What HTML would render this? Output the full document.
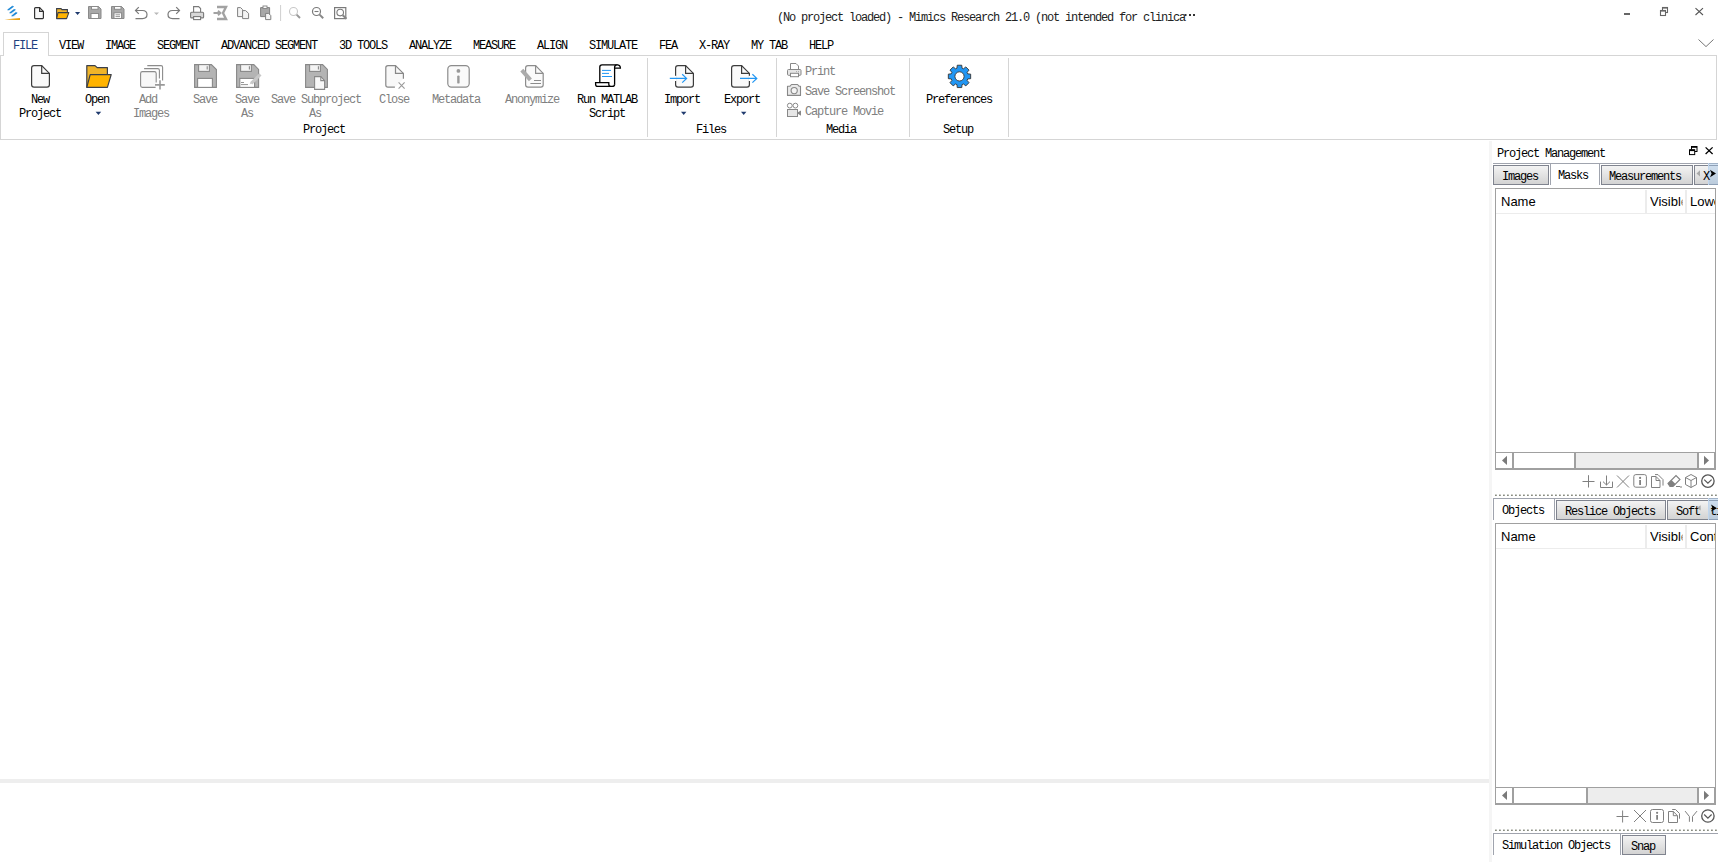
<!DOCTYPE html>
<html><head><meta charset="utf-8">
<style>
*{margin:0;padding:0;box-sizing:border-box}
html,body{width:1718px;height:862px;overflow:hidden;background:#fff;position:relative}
body{font-family:"Liberation Mono",monospace;font-size:12px;color:#000}
.a{position:absolute}
.t{position:absolute;margin:2px 0 0 -1px;white-space:pre;font-family:"Liberation Mono",monospace;font-size:12px;letter-spacing:-1.2px;line-height:14px}
.g{color:#808080}
.sans{font-family:"Liberation Sans",sans-serif;letter-spacing:0;font-size:13px}
svg{position:absolute;overflow:visible}
.tab{border:1px solid #80848f;background:linear-gradient(#f3f3f3,#d3d3d3)}
</style></head><body>

<!-- Title bar -->
<div class="t" style="left:778px;top:9px;color:#222">(No project loaded) - Mimics Research 21.0 (not intended for clinica</div>

<!-- Tabs -->
<div class="a" style="left:3px;top:32px;width:46px;height:24px;border:1px solid #d5d5d5;border-bottom:none;background:#fff;z-index:2"></div>
<div class="t" style="left:14px;top:37px;color:#1f3f7f;z-index:3">FILE</div>
<div class="t" style="left:60px;top:37px">VIEW</div>
<div class="t" style="left:106px;top:37px">IMAGE</div>
<div class="t" style="left:158px;top:37px">SEGMENT</div>
<div class="t" style="left:222px;top:37px">ADVANCED SEGMENT</div>
<div class="t" style="left:340px;top:37px">3D TOOLS</div>
<div class="t" style="left:410px;top:37px">ANALYZE</div>
<div class="t" style="left:474px;top:37px">MEASURE</div>
<div class="t" style="left:538px;top:37px">ALIGN</div>
<div class="t" style="left:590px;top:37px">SIMULATE</div>
<div class="t" style="left:660px;top:37px">FEA</div>
<div class="t" style="left:700px;top:37px">X-RAY</div>
<div class="t" style="left:752px;top:37px">MY TAB</div>
<div class="t" style="left:810px;top:37px">HELP</div>

<!-- Ribbon -->
<div class="a" style="left:0;top:55px;width:1717px;height:85px;border:1px solid #d5d5d5;z-index:1"></div>
<div class="a" style="left:4px;top:55px;width:44px;height:1px;background:#fff;z-index:2"></div>
<!-- group separators -->
<div class="a" style="left:647px;top:58px;width:1px;height:79px;background:#d5d5d5"></div>
<div class="a" style="left:776px;top:58px;width:1px;height:79px;background:#d5d5d5"></div>
<div class="a" style="left:909px;top:58px;width:1px;height:79px;background:#d5d5d5"></div>
<div class="a" style="left:1008px;top:58px;width:1px;height:79px;background:#d5d5d5"></div>

<!-- ribbon labels -->
<div class="t" style="left:32px;top:91px">New</div>
<div class="t" style="left:20px;top:105px">Project</div>
<div class="t" style="left:86px;top:91px">Open</div>
<div class="t g" style="left:140px;top:91px">Add</div>
<div class="t g" style="left:134px;top:105px">Images</div>
<div class="t g" style="left:194px;top:91px">Save</div>
<div class="t g" style="left:236px;top:91px">Save</div>
<div class="t g" style="left:242px;top:105px">As</div>
<div class="t g" style="left:272px;top:91px">Save Subproject</div>
<div class="t g" style="left:310px;top:105px">As</div>
<div class="t" style="left:304px;top:121px">Project</div>
<div class="t g" style="left:380px;top:91px">Close</div>
<div class="t g" style="left:433px;top:91px">Metadata</div>
<div class="t g" style="left:506px;top:91px">Anonymize</div>
<div class="t" style="left:578px;top:91px">Run MATLAB</div>
<div class="t" style="left:590px;top:105px">Script</div>
<div class="t" style="left:665px;top:91px">Import</div>
<div class="t" style="left:725px;top:91px">Export</div>
<div class="t" style="left:697px;top:121px">Files</div>
<div class="t g" style="left:806px;top:63px">Print</div>
<div class="t g" style="left:806px;top:83px">Save Screenshot</div>
<div class="t g" style="left:806px;top:103px">Capture Movie</div>
<div class="t" style="left:827px;top:121px">Media</div>
<div class="t" style="left:927px;top:91px">Preferences</div>
<div class="t" style="left:944px;top:121px">Setup</div>

<!-- main area separator -->
<div class="a" style="left:0;top:779px;width:1489px;height:4px;background:#eeeeee"></div>
<!-- panel left column -->
<div class="a" style="left:1489px;top:141px;width:3px;height:721px;background:#f5f5f5"></div>

<!-- Right panel -->
<div class="t" style="left:1498px;top:145px">Project Management</div>


<!-- ===== RIGHT PANEL ===== -->
<div class="a" style="left:1493px;top:163px;width:225px;height:1px;background:#a0a4ae"></div>
<div class="a tab" style="left:1493px;top:165px;width:56px;height:20px"></div>
<div class="a" style="left:1550px;top:163px;width:50px;height:22px;background:#fff;border:1px solid #a0a4ae;border-bottom:none"></div>
<div class="a tab" style="left:1601px;top:165px;width:92px;height:20px"></div>
<div class="a tab" style="left:1694px;top:165px;width:30px;height:20px"></div>
<div class="a" style="left:1708px;top:163px;width:10px;height:22px;background:rgba(160,195,230,0.45);border-left:1px solid #c0d6ee"></div>
<div class="t" style="left:1503px;top:168px">Images</div>
<div class="t" style="left:1559px;top:167px">Masks</div>
<div class="t" style="left:1610px;top:168px">Measurements</div>
<div class="t" style="left:1704px;top:168px">X</div>

<div class="a" style="left:1495px;top:188px;width:221px;height:282px;border:1px solid #a0a0a0;border-bottom:2px solid #a0a0a0;background:#fff"></div>
<div class="a" style="left:1496px;top:213px;width:219px;height:1px;background:#ececec"></div>
<div class="a" style="left:1645px;top:190px;width:2px;height:23px;background:#ececec"></div>
<div class="a" style="left:1685px;top:190px;width:2px;height:23px;background:#ececec"></div>
<div class="t sans" style="left:1501px;top:195px;margin:0">Name</div>
<div class="t sans" style="left:1650px;top:195px;margin:0;width:33px;overflow:hidden">Visible</div>
<div class="t sans" style="left:1690px;top:195px;margin:0;width:25px;overflow:hidden">Lower</div>
<!-- scrollbar 1 -->
<div class="a" style="left:1714px;top:452px;width:2px;height:18px;background:#a0a0a0"></div>
<div class="a" style="left:1496px;top:452px;width:219px;height:1px;background:#a0a0a0"></div>
<div class="a" style="left:1512px;top:453px;width:2px;height:15px;background:#a0a0a0"></div>
<div class="a" style="left:1574px;top:453px;width:2px;height:15px;background:#a0a0a0"></div>
<div class="a" style="left:1576px;top:453px;width:121px;height:15px;background:#ededed"></div>
<div class="a" style="left:1697px;top:453px;width:2px;height:15px;background:#a0a0a0"></div>

<div class="a" style="left:1493px;top:498px;width:225px;height:1px;background:#a0a4ae"></div>
<div class="a" style="left:1493px;top:498px;width:62px;height:22px;background:#fff;border:1px solid #a0a4ae;border-bottom:none"></div>
<div class="a tab" style="left:1556px;top:500px;width:110px;height:20px"></div>
<div class="a tab" style="left:1667px;top:500px;width:60px;height:20px"></div>
<div class="a" style="left:1708px;top:498px;width:10px;height:22px;background:rgba(160,195,230,0.45);border-left:1px solid #c0d6ee"></div>
<div class="t" style="left:1503px;top:502px">Objects</div>
<div class="t" style="left:1566px;top:503px">Reslice Objects</div>
<div class="t" style="left:1677px;top:503px">Soft</div>
<div class="t" style="left:1711px;top:503px">ti</div>

<div class="a" style="left:1495px;top:523px;width:221px;height:282px;border:1px solid #a0a0a0;border-bottom:2px solid #a0a0a0;background:#fff"></div>
<div class="a" style="left:1496px;top:548px;width:219px;height:1px;background:#ececec"></div>
<div class="a" style="left:1645px;top:525px;width:2px;height:23px;background:#ececec"></div>
<div class="a" style="left:1685px;top:525px;width:2px;height:23px;background:#ececec"></div>
<div class="t sans" style="left:1501px;top:530px;margin:0">Name</div>
<div class="t sans" style="left:1650px;top:530px;margin:0;width:33px;overflow:hidden">Visible</div>
<div class="t sans" style="left:1690px;top:530px;margin:0;width:25px;overflow:hidden">Contour</div>
<!-- scrollbar 2 -->
<div class="a" style="left:1714px;top:787px;width:2px;height:18px;background:#a0a0a0"></div>
<div class="a" style="left:1496px;top:787px;width:219px;height:1px;background:#a0a0a0"></div>
<div class="a" style="left:1512px;top:788px;width:2px;height:15px;background:#a0a0a0"></div>
<div class="a" style="left:1586px;top:788px;width:2px;height:15px;background:#a0a0a0"></div>
<div class="a" style="left:1588px;top:788px;width:109px;height:15px;background:#ededed"></div>
<div class="a" style="left:1697px;top:788px;width:2px;height:15px;background:#a0a0a0"></div>

<div class="a" style="left:1493px;top:833px;width:225px;height:1px;background:#a0a4ae"></div>
<div class="a" style="left:1493px;top:833px;width:128px;height:22px;background:#fff;border:1px solid #a0a4ae;border-bottom:none"></div>
<div class="a tab" style="left:1622px;top:835px;width:44px;height:20px"></div>
<div class="t" style="left:1503px;top:837px">Simulation Objects</div>
<div class="t" style="left:1632px;top:838px">Snap</div>

<div class="a" style="left:1680px;top:192px;width:5px;height:18px;background:linear-gradient(90deg,rgba(255,255,255,0),#fff 80%)"></div>
<div class="a" style="left:1680px;top:527px;width:5px;height:18px;background:linear-gradient(90deg,rgba(255,255,255,0),#fff 80%)"></div>

<svg width="1718" height="862" style="left:0;top:0;z-index:5" viewBox="0 0 1718 862">
<!-- ===== QAT ===== -->
<g id="logo">
 <path d="M12,9 L17,12 L15,17 L10,14Z" fill="#eeeeee" opacity="0.6"/>
 <path d="M7.6,9.8 L9,10 L13.6,6.6 L12.2,6.2Z M9.6,12.8 L11,13 L15.4,9.8 L14,9.4Z M11.6,15.9 L13,16.1 L17.2,12.9 L15.8,12.5Z" fill="#0b7fd4" stroke="#0b7fd4" stroke-width="0.6" stroke-linejoin="round"/>
 <path d="M4.5,19.6 Q12,18.6 20,18 L20,20 Q12,20.2 4.5,19.6Z" fill="#eaa010"/>
</g>
<path d="M34.6,8.6 Q34.6,7.6 35.6,7.6 L39.6,7.6 L43.4,11.4 L43.4,17.8 Q43.4,18.6 42.6,18.6 L35.4,18.6 Q34.6,18.6 34.6,17.8Z" fill="#f8f8f8" stroke="#333" stroke-width="1.2"/>
<path d="M39.6,7.6 V11.4 H43.4" fill="none" stroke="#333" stroke-width="1.2"/>
<!-- folder -->
<path d="M56.6,18.6 V8.6 H61 L62,9.6 H67.4 V12.6" fill="#f0b429" stroke="#3a3f4a" stroke-width="1.1"/>
<path d="M58,12.6 H68.8 L66.6,18.6 H56.6Z" fill="#ffb300" stroke="#3a3f4a" stroke-width="1.1" stroke-linejoin="round"/>
<path d="M75,12 H80.2 L77.6,15Z" fill="#1f3a6e"/>
<!-- save -->
<path d="M88.5,6.5 H98.5 L101,9 V18.5 H88.5Z" fill="#a8a8a8" stroke="#8a8a8a" stroke-width="1"/>
<rect x="91.5" y="6.5" width="6.5" height="2.8" fill="#fff" stroke="#8a8a8a" stroke-width="1"/>
<rect x="91" y="13.5" width="7.6" height="5" fill="#fff" stroke="#8a8a8a" stroke-width="1"/>
<!-- save all -->
<path d="M111.5,6.5 H121.5 L124,9 V18.5 H111.5Z" fill="#a8a8a8" stroke="#8a8a8a" stroke-width="1"/>
<rect x="114.5" y="6.5" width="6.5" height="2.8" fill="#fff" stroke="#8a8a8a" stroke-width="1"/>
<rect x="114" y="12.8" width="7.6" height="5.7" fill="#fff" stroke="#8a8a8a" stroke-width="1"/>
<path d="M115.5,14.8 H120 M115.5,16.6 H120" stroke="#8a8a8a" stroke-width="0.9"/>
<!-- undo -->
<path d="M135.5,10.5 H142.5 Q147,10.5 147,14.6 Q147,18.6 142.5,18.6 H135.5" fill="none" stroke="#7a7a7a" stroke-width="1.2"/>
<path d="M138.8,7.2 L135.5,10.5 L138.8,13.8" fill="none" stroke="#7a7a7a" stroke-width="1.2"/>
<path d="M154,12.5 H159 L156.5,15Z" fill="#b8b8b8"/>
<!-- redo -->
<path d="M179.5,10.5 H172.5 Q168,10.5 168,14.6 Q168,18.6 172.5,18.6 H179.5" fill="none" stroke="#7a7a7a" stroke-width="1.2"/>
<path d="M176.2,7.2 L179.5,10.5 L176.2,13.8" fill="none" stroke="#7a7a7a" stroke-width="1.2"/>
<!-- print -->
<path d="M193.6,12.3 V6.6 H198.6 L200.6,8.6 V12.3" fill="#fff" stroke="#7a7a7a" stroke-width="1.1"/>
<rect x="190.6" y="12.3" width="13" height="5.6" rx="1" fill="#d8d8d8" stroke="#7a7a7a" stroke-width="1.1"/>
<rect x="193.6" y="16.6" width="7" height="3" fill="#fff" stroke="#7a7a7a" stroke-width="1.1"/>
<!-- exit (blurred) -->
<defs><filter id="bl" x="-20%" y="-20%" width="140%" height="140%"><feGaussianBlur stdDeviation="0.5"/></filter></defs><g opacity="0.6" filter="url(#bl)"><path d="M217,7 H226 L223,13 L226,19 H217" fill="none" stroke="#666" stroke-width="2.4"/><path d="M213.5,13 H220 M218,10.8 L220.5,13 L218,15.2" stroke="#666" stroke-width="1.8" fill="none"/></g>
<!-- copy -->
<path d="M237.6,7.6 H240.6 L242.6,9.6 V16.6 H237.6Z" fill="#f4f4f4" stroke="#808080" stroke-width="1"/>
<path d="M242.6,10.6 H245.6 L248.6,13.4 V18.6 H242.6Z" fill="#f4f4f4" stroke="#808080" stroke-width="1"/>
<!-- paste -->
<path d="M260.6,7.6 H269.6 V16.6 H260.6Z" fill="#a8a8a8" stroke="#808080" stroke-width="1"/>
<rect x="263" y="6" width="4" height="2.4" fill="#fff" stroke="#808080" stroke-width="0.9"/>
<path d="M265.6,13.4 H268.6 L270.8,15.6 V19.6 H265.6Z" fill="#f4f4f4" stroke="#808080" stroke-width="1"/>
<path d="M280.6,5 V21" stroke="#cfcfcf" stroke-width="1"/>
<!-- zoom -->
<circle cx="293.5" cy="11.5" r="4" fill="#fff" stroke="#c8c8c8" stroke-width="1.1"/>
<path d="M296.6,14.6 L300,18" stroke="#999" stroke-width="2"/>
<circle cx="316.5" cy="11.5" r="4" fill="#fff" stroke="#7a7a7a" stroke-width="1.2"/>
<path d="M314.5,11.5 H318.5" stroke="#7a7a7a" stroke-width="1.1"/>
<path d="M319.6,14.6 L323.2,18.2" stroke="#888" stroke-width="2"/>
<rect x="334.6" y="7.6" width="11.2" height="11" fill="none" stroke="#7a7a7a" stroke-width="1.2"/>
<circle cx="340.2" cy="12.6" r="3.3" fill="#fff" stroke="#7a7a7a" stroke-width="1.1"/>
<path d="M342.8,15.2 L346.4,18.8" stroke="#888" stroke-width="2"/>
<!-- window controls -->
<rect x="1184.5" y="14" width="2" height="2" fill="#333"/><rect x="1189" y="14" width="2" height="2" fill="#333"/><rect x="1193" y="14" width="2" height="2" fill="#333"/>
<rect x="1624" y="13" width="6" height="2" fill="#666"/>
<rect x="1662.5" y="7.5" width="5" height="5" fill="none" stroke="#666" stroke-width="1.1"/>
<path d="M1662,7.8 H1668" stroke="#666" stroke-width="1.6"/>
<rect x="1660.5" y="10.5" width="5" height="5" fill="#fff" stroke="#666" stroke-width="1.1"/>
<path d="M1660,10.8 H1666" stroke="#666" stroke-width="1.6"/>
<path d="M1695.5,8.2 L1703,15 M1703,8.2 L1695.5,15" stroke="#555" stroke-width="1.1"/>
<path d="M1698.5,39.5 L1706,46.6 L1713.5,39.5" fill="none" stroke="#777" stroke-width="1"/>

<!-- ===== RIBBON ===== -->
<!-- New project -->
<path d="M31.6,68 Q31.6,65.6 34,65.6 H41.7 L49.4,73.4 V84.8 Q49.4,87.2 47,87.2 H34 Q31.6,87.2 31.6,84.8Z" fill="#fafafa" stroke="#3c3c3c" stroke-width="1.2"/>
<path d="M41.7,65.6 V73.4 H49.4" fill="none" stroke="#3c3c3c" stroke-width="1.2"/>
<!-- Open -->
<path d="M86.8,87.4 V65.6 H95 L97.2,67.6 H107.4 V74.6" fill="#f0b429" stroke="#3a3f4a" stroke-width="1.2" stroke-linejoin="round"/>
<path d="M90.2,74.6 H111.2 L107.4,87.4 H86.8Z" fill="#ffb300" stroke="#3a3f4a" stroke-width="1.2" stroke-linejoin="round"/>
<path d="M95.6,111.8 H101.2 L98.4,115Z" fill="#1f3a6e"/>
<!-- Add images -->
<path d="M147.3,65.6 H161 Q162.6,65.6 162.6,67.2 V80.6" fill="none" stroke="#8c8c8c" stroke-width="1.1"/>
<path d="M144.1,68.6 H157.8 Q159.4,68.6 159.4,70.2 V78.4" fill="none" stroke="#8c8c8c" stroke-width="1.1"/>
<path d="M155.6,87.4 H142.4 Q140.6,87.4 140.6,85.6 V73.4 Q140.6,71.6 142.4,71.6 H154.4 Q156.2,71.6 156.2,73.4 V82.4" fill="#f8f8f8" stroke="#8c8c8c" stroke-width="1.1"/>
<path d="M155,84.9 H164.8 M160,80.2 V89.6" stroke="#999" stroke-width="1.6"/>
<!-- Save -->
<path d="M194.6,64.6 H211.4 L216.4,69.6 V87.4 H194.6Z" fill="#b4b4b4" stroke="#888" stroke-width="1.1"/>
<rect x="198.6" y="64.6" width="10.8" height="6.8" fill="#f4f4f4" stroke="#888" stroke-width="1.1"/>
<path d="M207.2,66.2 V69.4" stroke="#888" stroke-width="1.1"/>
<rect x="197.6" y="78.4" width="14.8" height="9" fill="#fff" stroke="#888" stroke-width="1.1"/>
<!-- Save As -->
<path d="M236.6,64.6 H253.8 L258.6,69.4 V87.4 H236.6Z" fill="#b4b4b4" stroke="#888" stroke-width="1.1"/>
<rect x="240.6" y="64.6" width="10.8" height="6.8" fill="#f4f4f4" stroke="#888" stroke-width="1.1"/>
<path d="M249.4,66.2 V69.4" stroke="#888" stroke-width="1.1"/>
<rect x="239.8" y="78.4" width="14.8" height="9" fill="#fff" stroke="#888" stroke-width="1.1"/>
<path d="M241,82.5 H244 M241,84.6 H248" stroke="#888" stroke-width="0.9"/>
<path d="M251.2,83.4 L260.4,74.4" stroke="#c8c8c8" stroke-width="3.2"/><path d="M249.4,84.6 L251.6,81.2 L253.2,82.8Z" fill="#c8c8c8"/>
<!-- Subproject -->
<path d="M305.6,64.6 H322.6 L327.4,69.4 V87.4 H305.6Z" fill="#b4b4b4" stroke="#888" stroke-width="1.1"/>
<rect x="309.6" y="64.6" width="10.8" height="6.8" fill="#f4f4f4" stroke="#888" stroke-width="1.1"/>
<path d="M318.4,66.2 V69.4" stroke="#888" stroke-width="1.1"/>
<path d="M314.6,76.6 H320.8 L324.6,80.6 V89.4 H314.6Z" fill="#f8f8f8" stroke="#888" stroke-width="1.1"/>
<path d="M320.8,76.6 V80.6 H324.6" fill="none" stroke="#888" stroke-width="1.1"/>
<!-- Close -->
<path d="M394.9,87.2 H388 Q385.8,87.2 385.8,85 V67.8 Q385.8,65.6 388,65.6 H395.5 L403.4,73.4 V78.8" fill="#f8f8f8" stroke="#888" stroke-width="1.2"/>
<path d="M395.5,65.6 V73.4 H403.4" fill="none" stroke="#888" stroke-width="1.2"/>
<path d="M398.6,82.4 L404.6,88.6 M404.6,82.4 L398.6,88.6" stroke="#999" stroke-width="1.1"/>
<!-- Metadata -->
<rect x="447.8" y="65.6" width="21.4" height="21.6" rx="3.6" fill="#fafafa" stroke="#8c8c8c" stroke-width="1.2"/>
<circle cx="458.4" cy="70.9" r="1.9" fill="#999"/>
<path d="M458.4,76.6 V82.4" stroke="#999" stroke-width="2.4" stroke-linecap="round"/>
<!-- Anonymize -->
<path d="M528,65.6 H535.6 L543.2,73.4 V84.8 Q543.2,87.2 540.8,87.2 H528 Q525.6,87.2 525.6,84.8 V68 Q525.6,65.6 528,65.6Z" fill="#fafafa" stroke="#8c8c8c" stroke-width="1.2"/>
<path d="M535.6,65.6 V73.4 H543.2" fill="none" stroke="#8c8c8c" stroke-width="1.2"/>
<path d="M534,80.5 H541 M530.4,83.5 H541" stroke="#8c8c8c" stroke-width="1"/>
<path d="M521.8,70.2 L530.4,79.8" stroke="#ababab" stroke-width="4"/>
<!-- MATLAB -->
<path d="M599.8,82.6 V67 Q599.8,64.8 602,64.8 H617.6" fill="none" stroke="#000" stroke-width="1.3"/>
<path d="M614.6,84.4 V67.2 Q614.6,64.8 617.2,64.8 Q620.4,64.8 620.4,68.2 H614.6" fill="#fff" stroke="#000" stroke-width="1.3"/>
<path d="M614.6,84.2 Q614.6,86.4 612,86.4 H597.8 Q595.6,86.4 595.6,84.2 V82.6 H608.8 V84.2 Q608.8,86.4 611.2,86.4" fill="#fff" stroke="#000" stroke-width="1.3"/>
<path d="M602,70.4 H611 M602,73.4 H609 M602,76.5 H612" stroke="#2196f3" stroke-width="1"/>
<!-- Import -->
<path d="M678,65.6 H685.6 L693.4,73.4 V84.8 Q693.4,87.2 691,87.2 H678 Q675.6,87.2 675.6,84.8 V68 Q675.6,65.6 678,65.6Z" fill="#fafafa" stroke="#3c3c3c" stroke-width="1.2"/>
<path d="M685.6,65.6 V73.4 H693.4" fill="none" stroke="#3c3c3c" stroke-width="1.2"/>
<path d="M675.6,75.8 V81" stroke="#fff" stroke-width="2"/>
<path d="M669.8,78.4 H686.6 M682.2,74.2 L686.6,78.4 L682.2,82.6" fill="none" stroke="#2196f3" stroke-width="1.2"/>
<path d="M681,111.8 H686.4 L683.7,115Z" fill="#1f3a6e"/>
<!-- Export -->
<path d="M734,65.6 H741.6 L749.4,73.4 V84.8 Q749.4,87.2 747,87.2 H734 Q731.6,87.2 731.6,84.8 V68 Q731.6,65.6 734,65.6Z" fill="#fafafa" stroke="#3c3c3c" stroke-width="1.2"/>
<path d="M741.6,65.6 V73.4 H749.4" fill="none" stroke="#3c3c3c" stroke-width="1.2"/>
<path d="M749.4,75.8 V81" stroke="#fff" stroke-width="2"/>
<path d="M740,78.4 H756.8 M752.4,74.2 L756.8,78.4 L752.4,82.6" fill="none" stroke="#2196f3" stroke-width="1.2"/>
<path d="M741,111.8 H746.4 L743.7,115Z" fill="#1f3a6e"/>
<!-- Print small -->
<path d="M790.5,69.5 V63.5 H796 L798.5,66 V69.5" fill="#fff" stroke="#888" stroke-width="1"/>
<rect x="787.5" y="69.5" width="13.5" height="5.8" rx="1" fill="#e6e6e6" stroke="#888" stroke-width="1"/>
<rect x="790.5" y="73.3" width="8" height="3.4" fill="#fff" stroke="#888" stroke-width="1"/>
<path d="M796.2,71.6 H796.9 M798.3,71.6 H799" stroke="#888" stroke-width="0.9"/>
<!-- camera -->
<path d="M787.5,86.2 H790 L791.5,84.5 H797.5 L799,86.2 H800.5 V95.4 H787.5Z" fill="#eaeaea" stroke="#888" stroke-width="1.1" stroke-linejoin="round"/>
<circle cx="794.2" cy="90.6" r="3.1" fill="#f4f4f4" stroke="#888" stroke-width="1.1"/>
<!-- movie -->
<circle cx="789.8" cy="105.6" r="2.4" fill="#fff" stroke="#888" stroke-width="1"/>
<circle cx="795.4" cy="105.6" r="2.4" fill="#fff" stroke="#888" stroke-width="1"/>
<rect x="787.5" y="109.5" width="10" height="7" fill="#e6e6e6" stroke="#888" stroke-width="1"/>
<path d="M797.5,112.6 L801,110.4 V115.8 L797.5,113.6Z" fill="#888"/>
<!-- gear -->
<g transform="translate(959.5,76.4)">
 <path d="M-2.54,-8.22 L-2.26,-11.17 L2.26,-11.17 L2.54,-8.22 L4.01,-7.61 L6.30,-9.50 L9.50,-6.30 L7.61,-4.01 L8.22,-2.54 L11.17,-2.26 L11.17,2.26 L8.22,2.54 L7.61,4.01 L9.50,6.30 L6.30,9.50 L4.01,7.61 L2.54,8.22 L2.26,11.17 L-2.26,11.17 L-2.54,8.22 L-4.01,7.61 L-6.30,9.50 L-9.50,6.30 L-7.61,4.01 L-8.22,2.54 L-11.17,2.26 L-11.17,-2.26 L-8.22,-2.54 L-7.61,-4.01 L-9.50,-6.30 L-6.30,-9.50 L-4.01,-7.61Z" fill="#2196f3" stroke="#333" stroke-width="0.9"/>
 <circle r="4.6" fill="#fff" stroke="#333" stroke-width="0.9"/>
</g>

<!-- ===== PANEL ICONS ===== -->
<rect x="1691.5" y="146.5" width="5.5" height="5" fill="none" stroke="#000" stroke-width="1"/>
<path d="M1691.5,147 H1697" stroke="#000" stroke-width="1.6"/>
<rect x="1689.5" y="149.8" width="5.2" height="4.8" fill="#fff" stroke="#000" stroke-width="1"/>
<path d="M1689.5,150.3 H1694.7" stroke="#000" stroke-width="1.6"/>
<path d="M1705.6,147.4 L1712.6,154 M1712.6,147.4 L1705.6,154" stroke="#000" stroke-width="1.3"/>
<path d="M1700,170.2 L1696.5,173.4 L1700,176.6Z" fill="#a8a8a8"/>
<path d="M1710,169.8 L1716,173.6 L1710,177.2 L1711.6,173.6Z" fill="#000"/>
<path d="M1700.6,505.2 L1697,507.8 L1700.6,510.4Z" fill="#a8a8a8"/>
<path d="M1711,504.6 L1717,508.2 L1711,511.6 L1712.6,508.2Z" fill="#000"/>
<!-- scroll arrows -->
<path d="M1507,455.8 L1502,460.4 L1507,465Z" fill="#7a7a7a"/>
<path d="M1704,455.8 L1709,460.4 L1704,465Z" fill="#7a7a7a"/>
<path d="M1507,790.8 L1502,795.4 L1507,800Z" fill="#7a7a7a"/>
<path d="M1704,790.8 L1709,795.4 L1704,800Z" fill="#7a7a7a"/>
<!-- toolbar 1 -->
<g stroke="#808080" stroke-width="1" fill="none">
 <path d="M1582.5,481.5 H1594.5 M1588.5,475.2 V487.5"/>
 <path d="M1600.5,481.6 V487.5 H1612.5 V481.6 M1606.5,475.5 V485 M1603,481.6 L1606.5,485 L1610,481.6"/>
 <path d="M1617,475.5 L1629,487.5 M1629,475.5 L1617,487.5"/>
 <rect x="1633.8" y="474.6" width="12.6" height="12.6" rx="2"/>
 <path d="M1651.5,476.5 H1656 L1660,480.5 V487.5 H1651.5Z M1656,476.5 V480.5 H1660 M1655,474.6 H1658 L1663,479.6 V485.6"/>
 <path d="M1682,487 H1680" />
 <path d="M1685.5,477.5 L1691,474.5 L1696.5,477.5 V484.5 L1691,487.5 L1685.5,484.5Z M1685.5,477.5 L1691,480.5 L1696.5,477.5 M1691,480.5 V487.5"/>
</g>
<circle cx="1640.1" cy="477.9" r="1.1" fill="#808080"/>
<path d="M1640.1,480 V485" stroke="#808080" stroke-width="1.8"/>
<path d="M1668,483.5 L1676,475.5 L1680,479.5 L1673,486.5 H1670Z" fill="none" stroke="#808080" stroke-width="1.1"/>
<path d="M1668,483.5 L1671.5,480 L1675.5,484 L1673,486.5 H1670Z" fill="#808080"/>
<path d="M1676,486.5 H1680" stroke="#808080" stroke-width="1"/>
<circle cx="1707.9" cy="481.1" r="6.2" fill="none" stroke="#555" stroke-width="1.3"/>
<path d="M1704.2,479.6 L1707.9,483.2 L1711.6,479.6" fill="none" stroke="#555" stroke-width="1.2"/>
<!-- toolbar 2 -->
<g stroke="#808080" stroke-width="1" fill="none">
 <path d="M1616.5,816.5 H1628.5 M1622.6,810.5 V822.5"/>
 <path d="M1634,810 L1646,822 M1646,810 L1634,822"/>
 <rect x="1650.5" y="809.5" width="13" height="13" rx="2"/>
 <path d="M1668.5,811.5 H1673.3 L1677.5,815.7 V822.5 H1668.5Z M1673.3,811.5 V815.7 H1677.5 M1672.2,809.5 H1675.5 L1679.5,813.5 V818.7"/>
 <path d="M1685.1,811.1 L1689.4,816.5 V821.8 M1697,811.1 L1692.5,816.5 V821.8"/>
</g>
<circle cx="1657.1" cy="812.8" r="1.1" fill="#808080"/>
<path d="M1657.1,815 V819.8" stroke="#808080" stroke-width="1.8"/>
<circle cx="1707.9" cy="816" r="6.2" fill="none" stroke="#555" stroke-width="1.3"/>
<path d="M1704.2,814.5 L1707.9,818.1 L1711.6,814.5" fill="none" stroke="#555" stroke-width="1.2"/>
<rect x="1495" y="494.6" width="1.8" height="1.3" fill="#7a7f72"/><rect x="1499" y="494.6" width="1.8" height="1.3" fill="#7a7f72"/><rect x="1503" y="494.6" width="1.8" height="1.3" fill="#7a7f72"/><rect x="1507" y="494.6" width="1.8" height="1.3" fill="#7a7f72"/><rect x="1511" y="494.6" width="1.8" height="1.3" fill="#7a7f72"/><rect x="1515" y="494.6" width="1.8" height="1.3" fill="#7a7f72"/><rect x="1519" y="494.6" width="1.8" height="1.3" fill="#7a7f72"/><rect x="1523" y="494.6" width="1.8" height="1.3" fill="#7a7f72"/><rect x="1527" y="494.6" width="1.8" height="1.3" fill="#7a7f72"/><rect x="1531" y="494.6" width="1.8" height="1.3" fill="#7a7f72"/><rect x="1535" y="494.6" width="1.8" height="1.3" fill="#7a7f72"/><rect x="1539" y="494.6" width="1.8" height="1.3" fill="#7a7f72"/><rect x="1543" y="494.6" width="1.8" height="1.3" fill="#7a7f72"/><rect x="1547" y="494.6" width="1.8" height="1.3" fill="#7a7f72"/><rect x="1551" y="494.6" width="1.8" height="1.3" fill="#7a7f72"/><rect x="1555" y="494.6" width="1.8" height="1.3" fill="#7a7f72"/><rect x="1559" y="494.6" width="1.8" height="1.3" fill="#7a7f72"/><rect x="1563" y="494.6" width="1.8" height="1.3" fill="#7a7f72"/><rect x="1567" y="494.6" width="1.8" height="1.3" fill="#7a7f72"/><rect x="1571" y="494.6" width="1.8" height="1.3" fill="#7a7f72"/><rect x="1575" y="494.6" width="1.8" height="1.3" fill="#7a7f72"/><rect x="1579" y="494.6" width="1.8" height="1.3" fill="#7a7f72"/><rect x="1583" y="494.6" width="1.8" height="1.3" fill="#7a7f72"/><rect x="1587" y="494.6" width="1.8" height="1.3" fill="#7a7f72"/><rect x="1591" y="494.6" width="1.8" height="1.3" fill="#7a7f72"/><rect x="1595" y="494.6" width="1.8" height="1.3" fill="#7a7f72"/><rect x="1599" y="494.6" width="1.8" height="1.3" fill="#7a7f72"/><rect x="1603" y="494.6" width="1.8" height="1.3" fill="#7a7f72"/><rect x="1607" y="494.6" width="1.8" height="1.3" fill="#7a7f72"/><rect x="1611" y="494.6" width="1.8" height="1.3" fill="#7a7f72"/><rect x="1615" y="494.6" width="1.8" height="1.3" fill="#7a7f72"/><rect x="1619" y="494.6" width="1.8" height="1.3" fill="#7a7f72"/><rect x="1623" y="494.6" width="1.8" height="1.3" fill="#7a7f72"/><rect x="1627" y="494.6" width="1.8" height="1.3" fill="#7a7f72"/><rect x="1631" y="494.6" width="1.8" height="1.3" fill="#7a7f72"/><rect x="1635" y="494.6" width="1.8" height="1.3" fill="#7a7f72"/><rect x="1639" y="494.6" width="1.8" height="1.3" fill="#7a7f72"/><rect x="1643" y="494.6" width="1.8" height="1.3" fill="#7a7f72"/><rect x="1647" y="494.6" width="1.8" height="1.3" fill="#7a7f72"/><rect x="1651" y="494.6" width="1.8" height="1.3" fill="#7a7f72"/><rect x="1655" y="494.6" width="1.8" height="1.3" fill="#7a7f72"/><rect x="1659" y="494.6" width="1.8" height="1.3" fill="#7a7f72"/><rect x="1663" y="494.6" width="1.8" height="1.3" fill="#7a7f72"/><rect x="1667" y="494.6" width="1.8" height="1.3" fill="#7a7f72"/><rect x="1671" y="494.6" width="1.8" height="1.3" fill="#7a7f72"/><rect x="1675" y="494.6" width="1.8" height="1.3" fill="#7a7f72"/><rect x="1679" y="494.6" width="1.8" height="1.3" fill="#7a7f72"/><rect x="1683" y="494.6" width="1.8" height="1.3" fill="#7a7f72"/><rect x="1687" y="494.6" width="1.8" height="1.3" fill="#7a7f72"/><rect x="1691" y="494.6" width="1.8" height="1.3" fill="#7a7f72"/><rect x="1695" y="494.6" width="1.8" height="1.3" fill="#7a7f72"/><rect x="1699" y="494.6" width="1.8" height="1.3" fill="#7a7f72"/><rect x="1703" y="494.6" width="1.8" height="1.3" fill="#7a7f72"/><rect x="1707" y="494.6" width="1.8" height="1.3" fill="#7a7f72"/><rect x="1711" y="494.6" width="1.8" height="1.3" fill="#7a7f72"/><rect x="1715" y="494.6" width="1.8" height="1.3" fill="#7a7f72"/><rect x="1495" y="829.6" width="1.8" height="1.3" fill="#7a7f72"/><rect x="1499" y="829.6" width="1.8" height="1.3" fill="#7a7f72"/><rect x="1503" y="829.6" width="1.8" height="1.3" fill="#7a7f72"/><rect x="1507" y="829.6" width="1.8" height="1.3" fill="#7a7f72"/><rect x="1511" y="829.6" width="1.8" height="1.3" fill="#7a7f72"/><rect x="1515" y="829.6" width="1.8" height="1.3" fill="#7a7f72"/><rect x="1519" y="829.6" width="1.8" height="1.3" fill="#7a7f72"/><rect x="1523" y="829.6" width="1.8" height="1.3" fill="#7a7f72"/><rect x="1527" y="829.6" width="1.8" height="1.3" fill="#7a7f72"/><rect x="1531" y="829.6" width="1.8" height="1.3" fill="#7a7f72"/><rect x="1535" y="829.6" width="1.8" height="1.3" fill="#7a7f72"/><rect x="1539" y="829.6" width="1.8" height="1.3" fill="#7a7f72"/><rect x="1543" y="829.6" width="1.8" height="1.3" fill="#7a7f72"/><rect x="1547" y="829.6" width="1.8" height="1.3" fill="#7a7f72"/><rect x="1551" y="829.6" width="1.8" height="1.3" fill="#7a7f72"/><rect x="1555" y="829.6" width="1.8" height="1.3" fill="#7a7f72"/><rect x="1559" y="829.6" width="1.8" height="1.3" fill="#7a7f72"/><rect x="1563" y="829.6" width="1.8" height="1.3" fill="#7a7f72"/><rect x="1567" y="829.6" width="1.8" height="1.3" fill="#7a7f72"/><rect x="1571" y="829.6" width="1.8" height="1.3" fill="#7a7f72"/><rect x="1575" y="829.6" width="1.8" height="1.3" fill="#7a7f72"/><rect x="1579" y="829.6" width="1.8" height="1.3" fill="#7a7f72"/><rect x="1583" y="829.6" width="1.8" height="1.3" fill="#7a7f72"/><rect x="1587" y="829.6" width="1.8" height="1.3" fill="#7a7f72"/><rect x="1591" y="829.6" width="1.8" height="1.3" fill="#7a7f72"/><rect x="1595" y="829.6" width="1.8" height="1.3" fill="#7a7f72"/><rect x="1599" y="829.6" width="1.8" height="1.3" fill="#7a7f72"/><rect x="1603" y="829.6" width="1.8" height="1.3" fill="#7a7f72"/><rect x="1607" y="829.6" width="1.8" height="1.3" fill="#7a7f72"/><rect x="1611" y="829.6" width="1.8" height="1.3" fill="#7a7f72"/><rect x="1615" y="829.6" width="1.8" height="1.3" fill="#7a7f72"/><rect x="1619" y="829.6" width="1.8" height="1.3" fill="#7a7f72"/><rect x="1623" y="829.6" width="1.8" height="1.3" fill="#7a7f72"/><rect x="1627" y="829.6" width="1.8" height="1.3" fill="#7a7f72"/><rect x="1631" y="829.6" width="1.8" height="1.3" fill="#7a7f72"/><rect x="1635" y="829.6" width="1.8" height="1.3" fill="#7a7f72"/><rect x="1639" y="829.6" width="1.8" height="1.3" fill="#7a7f72"/><rect x="1643" y="829.6" width="1.8" height="1.3" fill="#7a7f72"/><rect x="1647" y="829.6" width="1.8" height="1.3" fill="#7a7f72"/><rect x="1651" y="829.6" width="1.8" height="1.3" fill="#7a7f72"/><rect x="1655" y="829.6" width="1.8" height="1.3" fill="#7a7f72"/><rect x="1659" y="829.6" width="1.8" height="1.3" fill="#7a7f72"/><rect x="1663" y="829.6" width="1.8" height="1.3" fill="#7a7f72"/><rect x="1667" y="829.6" width="1.8" height="1.3" fill="#7a7f72"/><rect x="1671" y="829.6" width="1.8" height="1.3" fill="#7a7f72"/><rect x="1675" y="829.6" width="1.8" height="1.3" fill="#7a7f72"/><rect x="1679" y="829.6" width="1.8" height="1.3" fill="#7a7f72"/><rect x="1683" y="829.6" width="1.8" height="1.3" fill="#7a7f72"/><rect x="1687" y="829.6" width="1.8" height="1.3" fill="#7a7f72"/><rect x="1691" y="829.6" width="1.8" height="1.3" fill="#7a7f72"/><rect x="1695" y="829.6" width="1.8" height="1.3" fill="#7a7f72"/><rect x="1699" y="829.6" width="1.8" height="1.3" fill="#7a7f72"/><rect x="1703" y="829.6" width="1.8" height="1.3" fill="#7a7f72"/><rect x="1707" y="829.6" width="1.8" height="1.3" fill="#7a7f72"/><rect x="1711" y="829.6" width="1.8" height="1.3" fill="#7a7f72"/><rect x="1715" y="829.6" width="1.8" height="1.3" fill="#7a7f72"/>
</svg>
</body></html>
